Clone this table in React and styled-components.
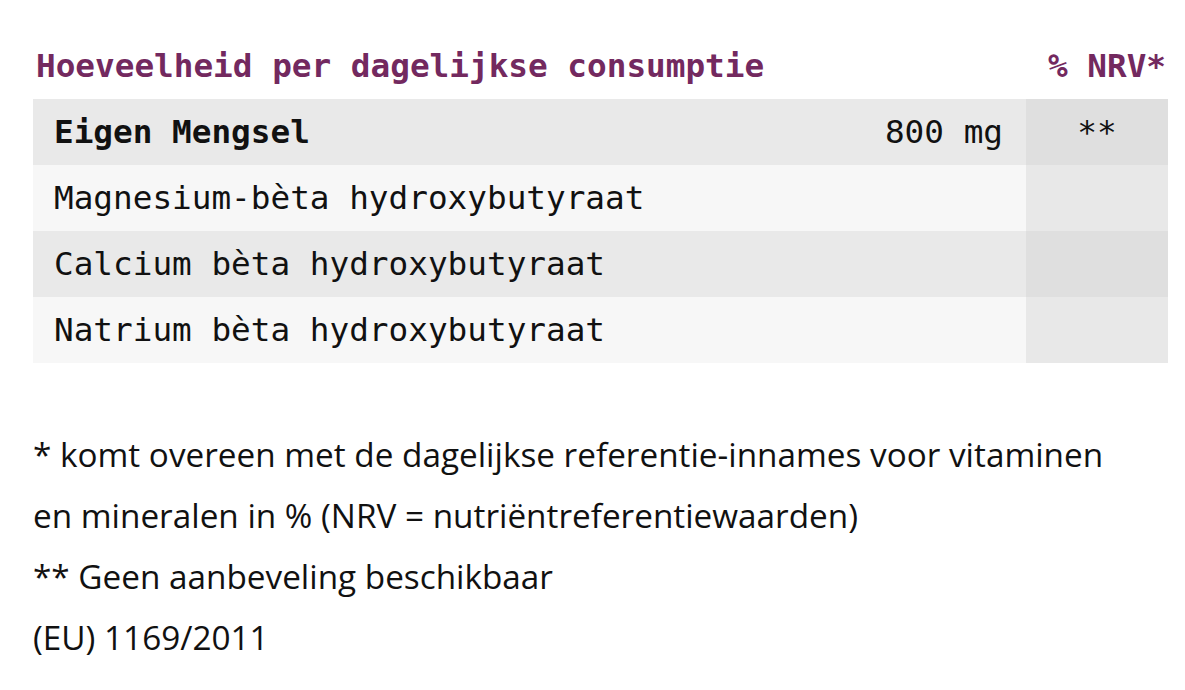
import styled, { createGlobalStyle } from 'styled-components';

const rows = [
  { name: 'Eigen Mengsel', amount: '800 mg', nrv: '**', bold: true },
  { name: 'Magnesium-bèta hydroxybutyraat' },
  { name: 'Calcium bèta hydroxybutyraat' },
  { name: 'Natrium bèta hydroxybutyraat' },
];

const App = () => {
  return (
    <Page>
      <GlobalStyle />
      <HeadRow>
        <HeadTitle>Hoeveelheid per dagelijkse consumptie</HeadTitle>
        <HeadTitle>% NRV*</HeadTitle>
      </HeadRow>
      <Table>
        {rows.map((row, i) => (
          <Row key={row.name} $dark={i % 2 === 0}>
            <NameCell $bold={row.bold}>
              <span>{row.name}</span>
              {row.amount && <Amount>{row.amount}</Amount>}
            </NameCell>
            <NrvCell $dark={i % 2 === 0}>{row.nrv}</NrvCell>
          </Row>
        ))}
      </Table>
      <Notes>
        * komt overeen met de dagelijkse referentie-innames voor vitaminen
        <br />
        en mineralen in % (NRV = nutriëntreferentiewaarden)
        <br />
        ** Geen aanbeveling beschikbaar
        <br />
        (EU) 1169/2011
      </Notes>
    </Page>
  );
};

export default App;

const mono = '"DejaVu Sans Mono", "Liberation Mono", monospace';
const purple = '#73295f';

const GlobalStyle = createGlobalStyle`
  body {
    margin: 0;
    background: #fff;
  }
`;

const Page = styled.div`
  padding: 47px 17px 0 33px;
`;

const HeadRow = styled.div`
  display: flex;
  justify-content: space-between;
  padding: 0 2px 0 3px;
  margin-bottom: 13px;
`;

const HeadTitle = styled.h2`
  margin: 0;
  font-family: ${mono};
  font-weight: bold;
  font-size: 32.7px;
  line-height: 39px;
  color: ${purple};
`;

const Table = styled.div`
  display: flex;
  flex-direction: column;
`;

const Row = styled.div`
  display: grid;
  grid-template-columns: 1fr 142px;
  height: 66px;
  background: ${(p) => (p.$dark ? '#e9e9e9' : '#f7f7f7')};
  font-family: ${mono};
  font-size: 32.7px;
  line-height: 66px;
  color: #111;
`;

const NameCell = styled.div`
  display: flex;
  justify-content: space-between;
  padding: 0 23px 0 21px;
  font-weight: ${(p) => (p.$bold ? 'bold' : 'normal')};
`;

const Amount = styled.span`
  font-weight: normal;
`;

const NrvCell = styled.div`
  background: ${(p) => (p.$dark ? '#dfdfdf' : '#e8e8e8')};
  text-align: center;
`;

const Notes = styled.p`
  margin: 61px 0 0;
  font-family: "Open Sans", "Noto Sans", sans-serif;
  font-size: 33.3px;
  line-height: 61px;
  color: #111;
`;
